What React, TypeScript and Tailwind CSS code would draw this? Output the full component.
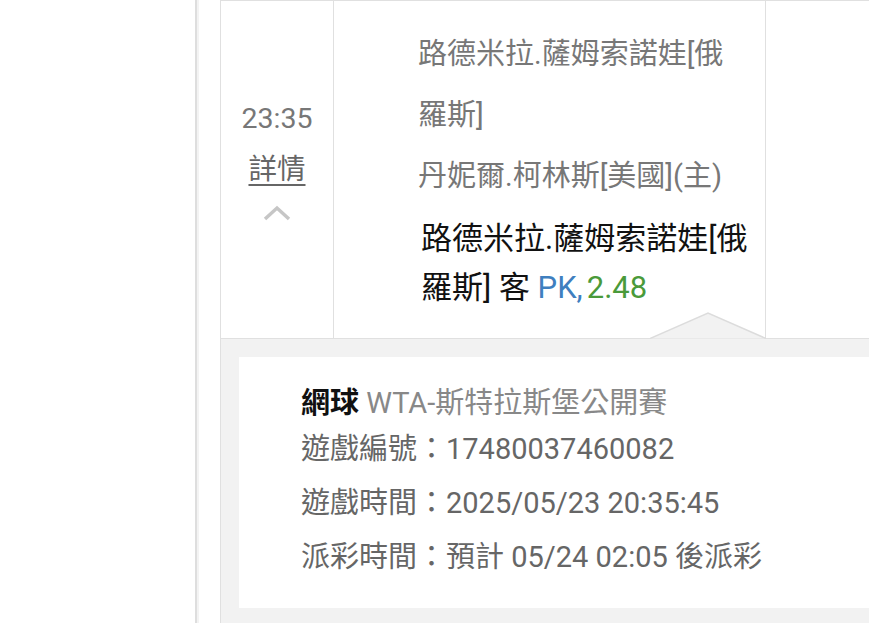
const font = "font-['Roboto','Noto_Sans_CJK_TC',sans-serif]";

function Notch() {
  return (
    <svg
      className="absolute right-[-1px] bottom-[-1px]"
      width="116"
      height="27"
      viewBox="0 0 116 27"
    >
      <polygon points="0,26.5 58,1 116,26.5" fill="#f2f2f2" />
      <polyline points="0,26.5 58,1 116,26.5" fill="none" stroke="#dcdcdc" strokeWidth="1.5" />
    </svg>
  );
}

export default function App() {
  return (
    <div className={`${font} flex h-[623px] w-[869px] overflow-hidden bg-white`}>
      {/* left blank + side rule */}
      <div className="w-[195px] shrink-0" />
      <div className="w-[2px] shrink-0 bg-[#dedede]" />
      <div className="w-[2px] shrink-0 bg-[#f3f3f3]" />
      <div className="w-[21px] shrink-0" />

      <div className="flex min-w-0 flex-1 flex-col border-l border-[#e0e0e0]">
        {/* bet row */}
        <div className="flex h-[339px] shrink-0 border-y border-[#e0e0e0]">
          <div className="flex w-[113px] shrink-0 flex-col items-center border-r border-[#e0e0e0] pt-[93px]">
            <div className="text-[28.5px] leading-[50px] text-[#777]">23:35</div>
            <div className="text-[28.5px] leading-[52px] text-[#666] underline underline-offset-[5px]">詳情</div>
            <svg width="28" height="18" viewBox="0 0 28 18" className="mt-[8px]">
              <polyline points="2,15 14,4 26,15" fill="none" stroke="#c6c6c6" strokeWidth="3.5" />
            </svg>
          </div>

          <div className="relative w-[432px] shrink-0 border-r border-[#e0e0e0] pl-[84px] pt-[23px]">
            <div className="w-[316px] text-[29px] leading-[61px] text-[#777]">
              <div>路德米拉.薩姆索諾娃[俄羅斯]</div>
              <div>丹妮爾.柯林斯[美國](主)</div>
            </div>
            <div className="mt-[7px] w-[338px] pl-[3px] text-[31px] leading-[49px] text-[#111]">
              <span>路德米拉.薩姆索諾娃[俄羅斯] 客 </span>
              <span className="text-[#3f7fbf]">PK,</span>
              <span className="ml-[4px] text-[#4a9a3a]">2.48</span>
            </div>
            <Notch />
          </div>

          <div className="flex-1" />
        </div>

        {/* detail panel */}
        <div className="flex-1 bg-[#f2f2f2] pl-[18px] pt-[18px]">
          <div className="bg-white pb-[24px] pl-[62px] pt-[27px] text-[29px] text-[#666]">
            <div className="leading-[38px]">
              <span className="font-bold text-[#111]">網球</span>
              <span className="text-[#888]"> WTA-斯特拉斯堡公開賽</span>
            </div>
            <div className="leading-[54px]">遊戲編號：17480037460082</div>
            <div className="leading-[54px]">遊戲時間：2025/05/23 20:35:45</div>
            <div className="leading-[54px]">派彩時間：預計 05/24 02:05 後派彩</div>
          </div>
        </div>
      </div>
    </div>
  );
}
